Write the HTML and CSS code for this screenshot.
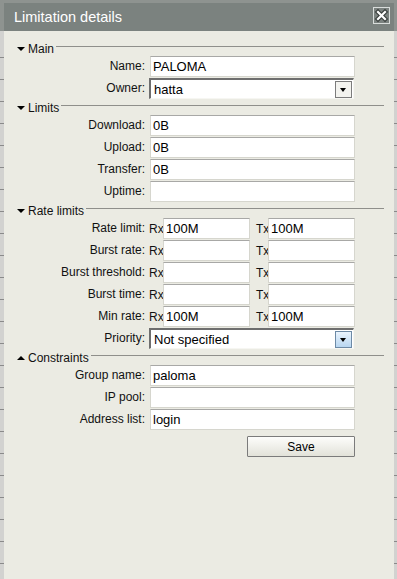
FILE: index.html
```html
<!DOCTYPE html>
<html lang="en">

<head>
    <meta charset="UTF-8">
    <meta name="viewport" content="width=device-width, initial-scale=1.0">
    <title>Limitation details</title>
    <link rel="stylesheet" href="styles.css">
</head>

<body>

    <div class="dialog">
        <div class="titlebar">
            <span class="title">Limitation details</span>
            <button class="close" title="Close">
                <svg width="15" height="15" viewBox="0 0 15 15">
                    <path d="M4 4 L11 11 M11 4 L4 11" stroke="#3a3f3d" stroke-width="4.5" stroke-linecap="square" fill="none"/>
                    <path d="M4 4 L11 11 M11 4 L4 11" stroke="#fff" stroke-width="2.2" stroke-linecap="square" fill="none"/>
                </svg>
            </button>
        </div>

        <div class="content">
            <div class="section">
                <div class="section-head"><span class="arrow"></span><span class="section-name">Main</span><span class="section-line"></span></div>
                <div class="row"><label>Name:</label><input class="text-input" value="PALOMA"></div>
                <div class="row"><label>Owner:</label>
                    <div class="select"><span>hatta</span><span class="select-btn"></span></div>
                </div>
            </div>

            <div class="section">
                <div class="section-head"><span class="arrow"></span><span class="section-name">Limits</span><span class="section-line"></span></div>
                <div class="row"><label>Download:</label><input class="text-input" value="0B"></div>
                <div class="row"><label>Upload:</label><input class="text-input" value="0B"></div>
                <div class="row"><label>Transfer:</label><input class="text-input" value="0B"></div>
                <div class="row"><label>Uptime:</label><input class="text-input" value=""></div>
            </div>

            <div class="section">
                <div class="section-head"><span class="arrow"></span><span class="section-name">Rate limits</span><span class="section-line"></span></div>
                <div class="row"><label>Rate limit:</label>
                    <div class="pair"><span class="unit">Rx</span><input class="text-input half" value="100M"><span class="unit tx">Tx</span><input class="text-input half" value="100M"></div>
                </div>
                <div class="row"><label>Burst rate:</label>
                    <div class="pair"><span class="unit">Rx</span><input class="text-input half" value=""><span class="unit tx">Tx</span><input class="text-input half" value=""></div>
                </div>
                <div class="row"><label>Burst threshold:</label>
                    <div class="pair"><span class="unit">Rx</span><input class="text-input half" value=""><span class="unit tx">Tx</span><input class="text-input half" value=""></div>
                </div>
                <div class="row"><label>Burst time:</label>
                    <div class="pair"><span class="unit">Rx</span><input class="text-input half" value=""><span class="unit tx">Tx</span><input class="text-input half" value=""></div>
                </div>
                <div class="row"><label>Min rate:</label>
                    <div class="pair"><span class="unit">Rx</span><input class="text-input half" value="100M"><span class="unit tx">Tx</span><input class="text-input half" value="100M"></div>
                </div>
                <div class="row"><label>Priority:</label>
                    <div class="select"><span>Not specified</span><span class="select-btn active"></span></div>
                </div>
            </div>

            <div class="section">
                <div class="section-head"><span class="arrow up"></span><span class="section-name">Constraints</span><span class="section-line"></span></div>
                <div class="row"><label>Group name:</label><input class="text-input" value="paloma"></div>
                <div class="row"><label>IP pool:</label><input class="text-input" value=""></div>
                <div class="row"><label>Address list:</label><input class="text-input" value="login"></div>
            </div>

            <div class="row actions">
                <span></span>
                <div class="buttons"><button class="save">Save</button></div>
            </div>
        </div>
    </div>

</body>

</html>
```

FILE: styles.css
```css
body {
    margin: 0;
    padding: 3px 3px 0 4px;
    height: 579px;
    box-sizing: border-box;
    overflow: hidden;
    font-family: "Liberation Sans", Arial, sans-serif;
    font-size: 12px;
    color: #111;
    background:
        linear-gradient(to bottom, #8e9390 0, #8e9390 31px, transparent 31px),
        repeating-linear-gradient(to bottom, transparent 0, transparent 21px, #8a8a8a 21px, #8a8a8a 22px),
        #d2d2d0;
    background-position: 0 0, 0 36px, 0 0;
}

.dialog {
    width: 390px;
    height: 576px;
    background-color: #ebebe3;
}

.titlebar {
    height: 28px;
    background-color: #7b827f;
    display: flex;
    justify-content: space-between;
    align-items: center;
    padding: 0 4px 0 10px;
}

.title {
    color: #fff;
    font-size: 14.5px;
}

.close {
    align-self: flex-start;
    margin-top: 4px;
    width: 17px;
    height: 17px;
    padding: 0;
    border: 1px solid #d9dddb;
    background: transparent;
    display: flex;
    align-items: center;
    justify-content: center;
}

.content {
    padding: 10px 10px 0 13px;
}

.section-head {
    display: flex;
    align-items: center;
    height: 15px;
}

.arrow {
    width: 0;
    height: 0;
    border-left: 4px solid transparent;
    border-right: 4px solid transparent;
    border-top: 4px solid #000;
    margin-right: 3px;
}

.arrow.up {
    border-top: 0;
    border-bottom: 4px solid #000;
}

.section-name {
    color: #111;
}

.section-line {
    flex: 1;
    align-self: flex-start;
    margin-top: 5px;
    margin-left: 2px;
    border-top: 1px solid #8f8f8b;
}

.row {
    display: grid;
    grid-template-columns: 128px 205px;
    column-gap: 5px;
    margin-bottom: 1px;
}

.row label {
    text-align: right;
    line-height: 21px;
    white-space: nowrap;
}

.text-input {
    box-sizing: border-box;
    width: 100%;
    height: 21px;
    margin: 0;
    padding: 0 2px;
    border: 1px solid #d6d6ce;
    border-top-color: #a8a8a6;
    background-color: #fff;
    font-family: "Liberation Sans", Arial, sans-serif;
    font-size: 13px;
    color: #000;
    outline: none;
}

.pair {
    display: flex;
    align-items: center;
    margin-left: -1px;
}

.unit {
    width: 14px;
    flex: none;
}

.unit.tx {
    width: 12px;
    margin-left: 6px;
}

.text-input.half {
    width: 87px;
    flex: none;
}

.select {
    box-sizing: border-box;
    height: 21px;
    margin-left: -1px;
    width: 205px;
    display: flex;
    align-items: center;
    justify-content: space-between;
    padding-left: 3px;
    border-top: 2px solid #6e6e6e;
    border-left: 2px solid #6e6e6e;
    border-right: 1px solid #f6f6f2;
    border-bottom: 1px solid #f6f6f2;
    background-color: #fff;
    font-size: 13px;
    color: #000;
}

.select-btn {
    box-sizing: border-box;
    width: 17px;
    height: 17px;
    margin-right: 1px;
    border: 1px solid #7c7c7c;
    background-color: #f3f3ef;
    position: relative;
}

.select-btn::after {
    content: "";
    position: absolute;
    left: 4px;
    top: 6px;
    border-left: 3.5px solid transparent;
    border-right: 3.5px solid transparent;
    border-top: 4px solid #000;
}

.select-btn.active {
    border-color: #6d8aa6;
    background: linear-gradient(to bottom, #eaf4fd, #b8d6f1);
}

.actions {
    margin-top: 6px;
}

.buttons {
    display: flex;
    justify-content: flex-end;
}

.save {
    width: 108px;
    height: 21px;
    padding: 0;
    border: 1px solid #7b7b7b;
    border-radius: 1px;
    background: linear-gradient(to bottom, #fdfdfb, #e2e2d9);
    font-family: "Liberation Sans", Arial, sans-serif;
    font-size: 12px;
    color: #000;
    cursor: pointer;
}
```
